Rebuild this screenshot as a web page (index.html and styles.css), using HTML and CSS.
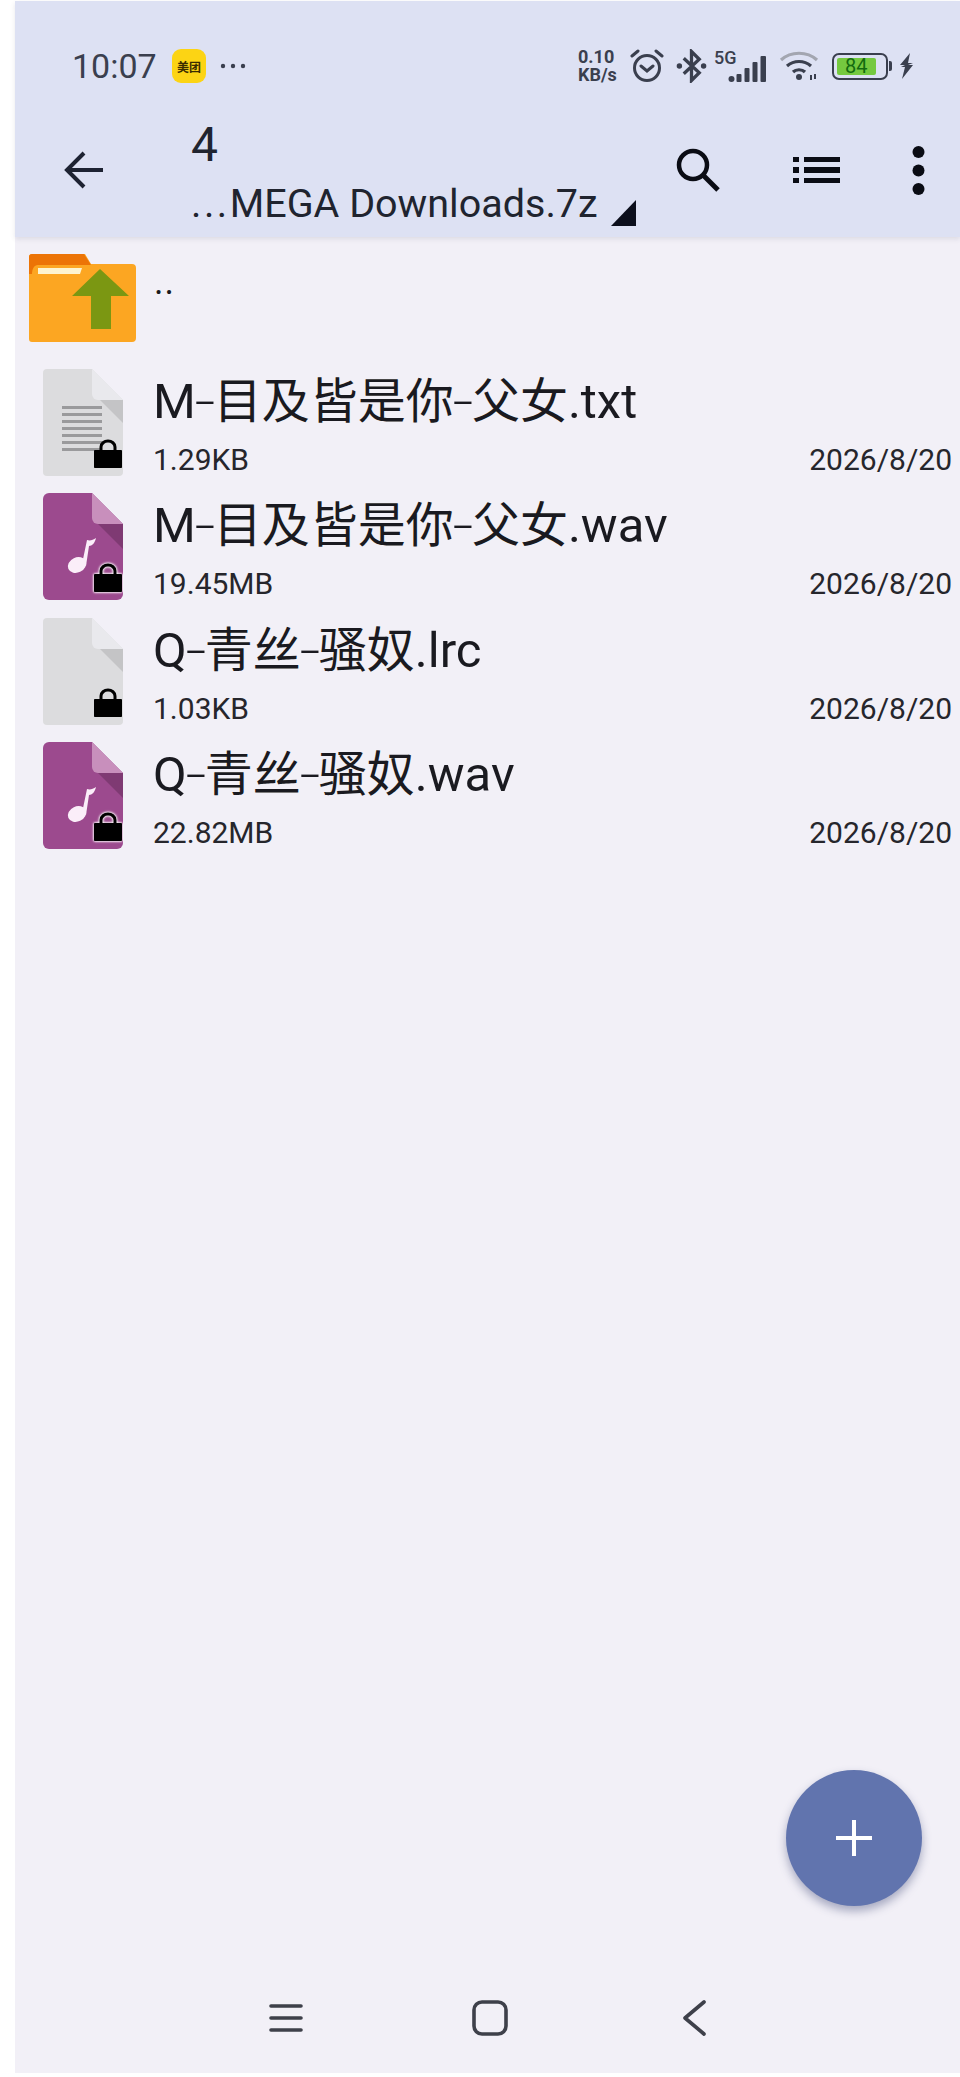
FILE: index.html
```html
<!DOCTYPE html>
<html lang="zh">
<head>
<meta charset="utf-8">
<title>MEGA Downloads.7z</title>
<link rel="stylesheet" href="styles.css">
</head>
<body>
<svg class="defs" width="0" height="0" aria-hidden="true">
  <defs>
    <symbol id="lock" viewBox="0 0 30 30">
      <path d="M8 13V8a7 6 0 0 1 14 0V13" fill="none" stroke="#000" stroke-width="3"/>
      <rect x="1" y="11" width="28" height="18" rx=".8" fill="#000"/>
    </symbol>
    <symbol id="doc-grey" viewBox="0 0 80 107">
      <path d="M4 0H49L80 31V103a4 4 0 0 1-4 4H4a4 4 0 0 1-4-4V4a4 4 0 0 1 4-4Z" fill="#dcdcde"/>
      <path d="M49 0L80 31H55a6 6 0 0 1-6-6Z" fill="#e9e9ed"/>
      <path d="M57 31H80V54Z" fill="#c4c4c6"/>
    </symbol>
    <symbol id="doc-audio" viewBox="0 0 80 107">
      <path d="M6 0H49L80 31V101a6 6 0 0 1-6 6H6a6 6 0 0 1-6-6V6a6 6 0 0 1 6-6Z" fill="#9c4a8e"/>
      <path d="M49 0L80 31H55a6 6 0 0 1-6-6Z" fill="#c88fbc"/>
      <path d="M55 31H80V56Z" fill="#7f3a73"/>
      <ellipse cx="34" cy="72" rx="9.500" ry="7.500" transform="rotate(-25 34 72)" fill="#fbeef9"/>
      <path d="M39 71L44 47C47 48 50 47 53 45C52 50 49 53 46 53L43 73Z" fill="#fbeef9"/>
    </symbol>
  </defs>
</svg>
<div class="app">
  <header class="top">
    <div class="status">
      <span class="time">10:07</span>
      <span class="app-badge">美团</span>
      <svg class="more-dots" viewBox="0 0 26 6"><circle cx="3" cy="3" r="2.200"/><circle cx="13" cy="3" r="2.200"/><circle cx="23" cy="3" r="2.200"/></svg>
      <span class="status-gap"></span>
      <span class="speed"><span>0.10</span><span>KB/s</span></span>
      <svg class="ic-alarm" viewBox="0 0 34 34" fill="none" stroke="#3a3f4e" stroke-width="3"><circle cx="17" cy="19" r="12.500"/><path d="M11 17l6 5 6-5M2 7l6-5M32 7l-6-5" stroke-linecap="round"/></svg>
      <svg class="ic-bt" viewBox="0 0 32 34" fill="none" stroke="#3a3f4e" stroke-width="3.400"><path d="M8 9L24 24 16 32V2L24 10 8 25"/><circle cx="3.500" cy="17" r="2.800" fill="#3a3f4e" stroke="none"/><circle cx="28.500" cy="17" r="2.800" fill="#3a3f4e" stroke="none"/></svg>
      <span class="signal"><span class="five-g">5G</span>
        <svg class="bars" viewBox="0 0 38 26"><circle cx="3" cy="23" r="3"/><rect x="8" y="18" width="5" height="8" rx="1"/><rect x="16" y="12" width="5" height="14" rx="1"/><rect x="24" y="6" width="5" height="20" rx="1"/><rect x="32" y="0" width="5.500" height="26" rx="1"/></svg>
      </span>
      <svg class="ic-wifi" viewBox="0 0 40 30" fill="none" stroke="#3a3f4e" stroke-width="3.200"><path d="M2 9C12 0 28 0 38 9" stroke="#a3a6b0"/><path d="M8 15C15 9 25 9 32 15M14 21C17 18 23 18 26 21"/><circle cx="20" cy="26" r="3" fill="#3a3f4e" stroke="none"/><path d="M32 24V29M36 23V28" stroke-width="2"/></svg>
      <span class="battery"><span class="battery-body"><span class="battery-fill">84</span></span><span class="battery-cap"></span></span>
      <svg class="ic-bolt" viewBox="0 0 15 26"><path d="M11 0L1 12H6L2 14H6L3 26 14 12H9L14 10H9Z" fill="#3a3f4e"/></svg>
    </div>
    <div class="toolbar">
      <svg class="ic-back" viewBox="0 0 40 38" fill="none" stroke="#1d2232" stroke-width="4"><path d="M39 19H3M20 2L3 19l17 17"/></svg>
      <div class="titles">
        <div class="title">4</div>
        <div class="subtitle-row">
          <span class="subtitle"><span class="ellipsis">...</span>MEGA Downloads.7z</span>
          <svg class="corner" viewBox="0 0 25 26"><path d="M25 0V26H0Z" fill="#0c0f1c"/></svg>
        </div>
      </div>
      <div class="actions">
        <svg class="ic-search" viewBox="0 0 44 44" fill="none" stroke="#0a0c14" stroke-width="4.500"><circle cx="17" cy="17" r="14"/><path d="M27 27l15 15" stroke-width="5"/></svg>
        <svg class="ic-list" viewBox="0 0 47 26" fill="#0a0c14"><rect x="0" y="0" width="6" height="5"/><rect x="0" y="10" width="6" height="6"/><rect x="0" y="21" width="6" height="5"/><rect x="11" y="0" width="36" height="5"/><rect x="11" y="10" width="36" height="6"/><rect x="11" y="21" width="36" height="5"/></svg>
        <svg class="ic-more" viewBox="0 0 13 49" fill="#0a0c14"><circle cx="6.500" cy="6" r="6"/><circle cx="6.500" cy="24.500" r="6"/><circle cx="6.500" cy="43" r="6"/></svg>
      </div>
    </div>
  </header>

  <main class="list">
    <div class="row-up">
      <svg class="ic-folder" viewBox="0 0 107 88">
        <path d="M3 0H56L62 10H103a4 4 0 0 1 4 4V84a4 4 0 0 1-4 4H3a3 3 0 0 1-3-3V3a3 3 0 0 1 3-3Z" fill="#fca622"/>
        <path d="M3 0H55L62 11H9C5 11 3 15 3 20H0V3a3 3 0 0 1 3-3Z" fill="#ec7406"/>
        <path d="M9 14H53L51 20H9Z" fill="#fdf4d0"/>
        <path d="M71 15L100 42H82V75H62V42H43Z" fill="#7b9712"/>
      </svg>
      <span class="up-label">..</span>
    </div>

    <div class="file">
      <div class="file-icon">
        <svg class="doc" viewBox="0 0 80 107">
          <use href="#doc-grey"/>
          <g fill="#9a9a9c"><rect x="19" y="37" width="40" height="3"/><rect x="19" y="44" width="40" height="3"/><rect x="19" y="51" width="40" height="3"/><rect x="19" y="58" width="40" height="3"/><rect x="19" y="65" width="40" height="3"/><rect x="19" y="72" width="40" height="3"/><rect x="19" y="79" width="40" height="3"/></g>
        </svg>
        <svg class="lock" viewBox="0 0 30 30"><use href="#lock"/></svg>
      </div>
      <div class="file-text">
        <div class="file-name">M<span class="dash">-</span><span class="cjk">目及皆是你</span><span class="dash">-</span><span class="cjk">父女</span>.txt</div>
        <div class="file-meta"><span>1.29KB</span><span>2026/8/20</span></div>
      </div>
    </div>

    <div class="file">
      <div class="file-icon">
        <svg class="doc" viewBox="0 0 80 107"><use href="#doc-audio"/></svg>
        <svg class="lock lock-ring" viewBox="0 0 30 30"><use href="#lock"/></svg>
      </div>
      <div class="file-text">
        <div class="file-name">M<span class="dash">-</span><span class="cjk">目及皆是你</span><span class="dash">-</span><span class="cjk">父女</span>.wav</div>
        <div class="file-meta"><span>19.45MB</span><span>2026/8/20</span></div>
      </div>
    </div>

    <div class="file">
      <div class="file-icon">
        <svg class="doc" viewBox="0 0 80 107"><use href="#doc-grey"/></svg>
        <svg class="lock" viewBox="0 0 30 30"><use href="#lock"/></svg>
      </div>
      <div class="file-text">
        <div class="file-name">Q<span class="dash">-</span><span class="cjk">青丝</span><span class="dash">-</span><span class="cjk">骚奴</span>.lrc</div>
        <div class="file-meta"><span>1.03KB</span><span>2026/8/20</span></div>
      </div>
    </div>

    <div class="file">
      <div class="file-icon">
        <svg class="doc" viewBox="0 0 80 107"><use href="#doc-audio"/></svg>
        <svg class="lock lock-ring" viewBox="0 0 30 30"><use href="#lock"/></svg>
      </div>
      <div class="file-text">
        <div class="file-name">Q<span class="dash">-</span><span class="cjk">青丝</span><span class="dash">-</span><span class="cjk">骚奴</span>.wav</div>
        <div class="file-meta"><span>22.82MB</span><span>2026/8/20</span></div>
      </div>
    </div>
  </main>

  <button class="fab" type="button" aria-label="add">
    <svg viewBox="0 0 36 36" fill="none" stroke="#fff" stroke-width="4"><path d="M18 0V36M0 18H36"/></svg>
  </button>

  <nav class="nav">
    <svg class="nav-menu" viewBox="0 0 34 30" fill="none" stroke="#3e404a" stroke-width="3.600" stroke-linecap="round"><path d="M2 3H32M2 15H32M2 27H32"/></svg>
    <svg class="nav-home" viewBox="0 0 36 36" fill="none" stroke="#3e404a" stroke-width="3.600"><rect x="2" y="2" width="32" height="32" rx="8"/></svg>
    <svg class="nav-back" viewBox="0 0 24 36" fill="none" stroke="#3e404a" stroke-width="3.600" stroke-linecap="round" stroke-linejoin="round"><path d="M22 2L3 18l19 16"/></svg>
  </nav>
</div>
</body>
</html>
```
FILE: styles.css
```css
* { box-sizing: border-box; }
html, body { margin: 0; padding: 0; background: #fff; }
body { height: 2077px; overflow: hidden; font-family: Roboto, "Noto Sans CJK SC", sans-serif; color: #1a1a20; }
.defs { position: absolute; }
.app { position: relative; display: flex; flex-direction: column; margin: 1px 0 0 15px; height: 2072px; background: #f2f0f7; }

.top { height: 236px; flex: none; background: #dde1f3; box-shadow: 0 2px 5px rgba(60, 60, 90, .12); padding-top: 47px; }
.status { display: flex; align-items: center; height: 36px; padding-left: 57px; color: #3a3f4e; }
.time { font-size: 34px; width: 100px; }
.app-badge { display: flex; align-items: center; justify-content: center; width: 34px; height: 34px; border-radius: 9px; background: #fcd414; font: 700 12px "Noto Sans CJK SC", sans-serif; color: #3a2c00; }
.more-dots { width: 26px; height: 6px; margin-left: 14px; fill: #3a3f4e; }
.status-gap { flex: 1; }
.speed { display: flex; flex-direction: column; width: 42px; margin-right: 10px; font: 700 18px/18px Roboto, sans-serif; }
.ic-alarm { width: 34px; height: 34px; margin-right: 12px; }
.ic-bt { width: 31px; height: 34px; margin-right: 7px; }
.signal { position: relative; width: 53px; height: 30px; margin-right: 12px; }
.five-g { position: absolute; left: 0; top: -2px; font: 500 18px/18px Roboto, sans-serif; }
.bars { position: absolute; left: 14px; top: 5px; width: 39px; height: 26px; fill: #3a3f4e; }
.ic-wifi { width: 40px; height: 30px; margin-right: 13px; }
.battery { display: flex; align-items: center; }
.battery-body { display: block; width: 56px; height: 27px; padding: 3px; border: 2.500px solid #3a3f4e; border-radius: 7px; }
.battery-fill { display: block; width: 84%; height: 100%; border-radius: 2px; background: #75c93f; color: #136b10; font: 400 20px/17px Roboto, sans-serif; text-align: center; }
.battery-cap { width: 3px; height: 10px; margin-left: 1px; border-radius: 0 2px 2px 0; background: #3a3f4e; }
.ic-bolt { width: 15px; height: 26px; margin-left: 7px; margin-right: 46px; }

.toolbar { display: flex; height: 153px; }
.ic-back { width: 40px; height: 38px; margin: 67px 0 0 49px; flex: none; }
.titles { margin-left: 88px; padding-top: 35px; width: 472px; flex: none; }
.title { font-size: 48px; line-height: 52px; color: #20242f; margin-left: -1px; }
.subtitle-row { display: flex; align-items: flex-start; margin-top: 10px; }
.subtitle { font-size: 39.500px; line-height: 46px; color: #20242f; white-space: nowrap; }
.ellipsis { letter-spacing: 2.500px; margin-left: -1px; }
.corner { width: 25px; height: 26px; margin: 19px 0 0 13px; flex: none; }
.actions { position: relative; flex: 1; }
.ic-search { position: absolute; left: 12px; top: 64px; width: 44px; height: 44px; }
.ic-list { position: absolute; left: 129px; top: 73px; width: 47px; height: 26px; }
.ic-more { position: absolute; left: 248px; top: 62px; width: 13px; height: 49px; }

.list { flex: 1; padding-top: 17px; }
.row-up { display: flex; height: 115px; padding-left: 14px; }
.ic-folder { width: 107px; height: 88px; flex: none; }
.up-label { margin-left: 18px; font-size: 36px; line-height: 56px; height: 56px; letter-spacing: 1px; }
.file { display: flex; height: 124.300px; padding-left: 28px; }
.file-icon { position: relative; width: 80px; height: 107px; flex: none; }
.doc { display: block; width: 80px; height: 107px; }
.lock { position: absolute; right: 0; bottom: 7px; width: 30px; height: 30px; }
.lock-ring { filter: drop-shadow(0 0 1px #fff) drop-shadow(0 0 1px #fff); }
.file-text { flex: 1; margin-left: 30px; padding: 3px 8px 0 0; }
.file-name { font-size: 49px; line-height: 60px; white-space: nowrap; }
.dash { display: inline-block; margin: 0 2px; font-weight: 300; transform: scaleX(1.5); }
.cjk { font-size: 48px; }
.file-meta { display: flex; justify-content: space-between; margin-top: 10px; font-size: 30px; line-height: 36px; color: #26262c; }

.fab { position: absolute; left: 771px; top: 1769px; width: 136px; height: 136px; padding: 0; border: 0; border-radius: 50%; background: #6174ae; box-shadow: 0 5px 10px rgba(50, 60, 110, .4); display: flex; align-items: center; justify-content: center; }
.fab svg { width: 36px; height: 36px; }

.nav { position: absolute; left: 0; right: 0; bottom: 37px; height: 36px; }
.nav-menu { position: absolute; left: 254px; top: 3px; width: 34px; height: 30px; }
.nav-home { position: absolute; left: 457px; top: 0; width: 36px; height: 36px; }
.nav-back { position: absolute; left: 667px; top: 0; width: 24px; height: 36px; }
```
